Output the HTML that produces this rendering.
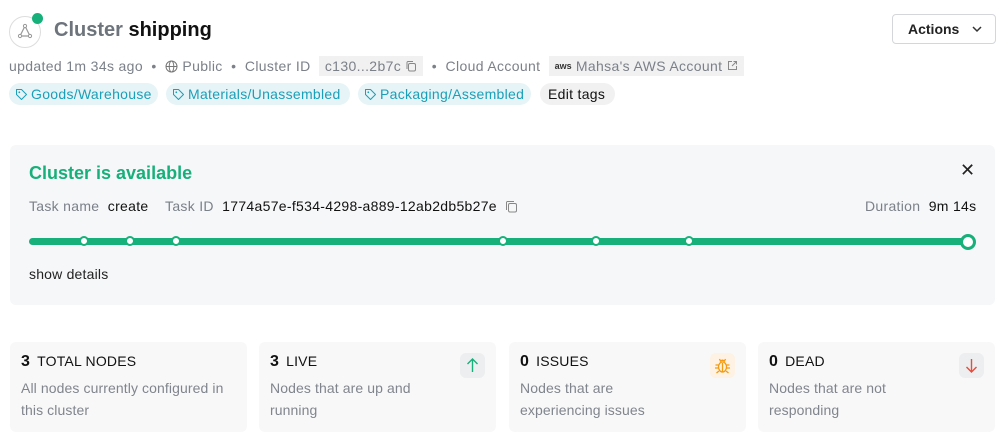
<!DOCTYPE html>
<html><head><meta charset="utf-8"><style>
*{box-sizing:border-box;margin:0;padding:0}
body{width:1006px;height:440px;background:#fff;font-family:"Liberation Sans",sans-serif;position:relative;overflow:hidden;color:#111}
.abs{position:absolute}
.g{color:#7b8089}
.pill{position:absolute;top:83px;height:22px;border-radius:11px;background:#e6f4f7;color:#1a9fb8;font-size:14px;line-height:22px;padding:0 0 0 6px;white-space:nowrap;letter-spacing:0.3px}
.pill svg{vertical-align:-2px;margin-right:3px}
.card{position:absolute;top:342px;width:237px;height:90px;background:#f8f8f9;border-radius:6px}
.card .t{position:absolute;left:11px;top:11px;font-size:14px;color:#111;letter-spacing:0.2px}
.card .t b{font-size:16px;margin-right:7px}
.card .d{position:absolute;left:11px;top:35px;font-size:14px;line-height:22px;color:#80858d;width:215px;letter-spacing:0.1px}
.ic{position:absolute;right:11px;top:11px;width:25px;height:25px;border-radius:6px;background:#eceef0}
.dot{position:absolute;top:236px;width:10px;height:10px;border-radius:50%;background:#fff;border:2.5px solid #17b07a}
</style></head><body>
<svg class="abs" style="left:8px;top:15px" width="40" height="40"><circle cx="17" cy="17" r="15.5" fill="none" stroke="#ddd"/><path d="M17 11 L12 21 L22 21 Z" fill="none" stroke="#999" stroke-width="1.2"/><circle cx="17" cy="11" r="1.6" fill="#fff" stroke="#999"/><circle cx="12" cy="21" r="1.6" fill="#fff" stroke="#999"/><circle cx="22" cy="21" r="1.6" fill="#fff" stroke="#999"/></svg>
<div class="abs" style="left:32px;top:13px;width:11px;height:11px;border-radius:50%;background:#17b07a"></div>
<div class="abs" style="left:54px;top:19px;font-size:20px;font-weight:bold;white-space:nowrap"><span style="color:#6e747c">Cluster</span> <span>shipping</span></div>
<div class="abs" style="left:892px;top:14px;width:104px;height:30px;border:1px solid #d3d6da;border-radius:4px;font-size:14px;font-weight:bold;line-height:28px;padding-left:15px;color:#222">Actions<svg class="abs" style="left:78px;top:9px" width="12" height="10"><path d="M2 3 L6 7 L10 3" fill="none" stroke="#333" stroke-width="1.5"/></svg></div>
<div class="abs g" style="left:9px;top:57px;font-size:14px;line-height:18px;white-space:nowrap;letter-spacing:0.35px">updated 1m 34s ago &nbsp;•&nbsp;
<svg width="13" height="13" style="vertical-align:-2px"><circle cx="6.5" cy="6.5" r="5.5" fill="none" stroke="#777"/><ellipse cx="6.5" cy="6.5" rx="2.3" ry="5.5" fill="none" stroke="#777"/><path d="M1 6.5H12" stroke="#777"/></svg> Public &nbsp;•&nbsp; Cluster ID
<span style="background:#f1f1f2;padding:2px 6px;margin-left:4px">c130...2b7c <svg width="12" height="12" style="vertical-align:-1px"><rect x="3.5" y="3.5" width="7" height="7.5" rx="1.5" fill="none" stroke="#888"/><path d="M2 9V2.5A1 1 0 0 1 3 1.5H8" fill="none" stroke="#888"/></svg></span> &nbsp;•&nbsp; Cloud Account
<span style="background:#f1f1f2;padding:2px 6px;margin-left:4px"><span style="font-size:9px;color:#333;vertical-align:2px;font-weight:bold;letter-spacing:0">aws</span> Mahsa's AWS Account <svg width="11" height="11"><path d="M5 1.5H1.5V9.5H9.5V6M6.5 1.5H9.5V4.5M9.5 1.5L5 6" fill="none" stroke="#888"/></svg></span></div>
<div class="pill" style="left:9px;width:149px"><svg width="13" height="13"><path d="M1.5 1.5H6.5L11.5 6.5L6.5 11.5L1.5 6.5Z" fill="none" stroke="#1a9fb8" stroke-linejoin="round"/><circle cx="4.3" cy="4.3" r="0.9" fill="#1a9fb8"/></svg>Goods/Warehouse</div>
<div class="pill" style="left:166px;width:184px"><svg width="13" height="13"><path d="M1.5 1.5H6.5L11.5 6.5L6.5 11.5L1.5 6.5Z" fill="none" stroke="#1a9fb8" stroke-linejoin="round"/><circle cx="4.3" cy="4.3" r="0.9" fill="#1a9fb8"/></svg>Materials/Unassembled</div>
<div class="pill" style="left:358px;width:173px"><svg width="13" height="13"><path d="M1.5 1.5H6.5L11.5 6.5L6.5 11.5L1.5 6.5Z" fill="none" stroke="#1a9fb8" stroke-linejoin="round"/><circle cx="4.3" cy="4.3" r="0.9" fill="#1a9fb8"/></svg>Packaging/Assembled</div>
<div class="pill" style="left:540px;width:75px;background:#f1f1f2;color:#111;padding-left:8px">Edit tags</div>

<div class="abs" style="left:10px;top:145px;width:985px;height:160px;background:#f6f7f9;border-radius:6px"></div>
<div class="abs" style="left:29px;top:163px;font-size:18px;font-weight:bold;color:#17b07a">Cluster is available</div>
<div class="abs" style="left:960px;top:160px;font-size:18px;color:#222">✕</div>
<div class="abs" style="left:29px;top:198px;font-size:14px;white-space:nowrap;letter-spacing:0.3px"><span class="g">Task name</span>&nbsp; create &nbsp;&nbsp; <span class="g">Task ID</span>&nbsp; 1774a57e-f534-4298-a889-12ab2db5b27e &nbsp;<svg width="13" height="13" style="vertical-align:-2px"><rect x="3.5" y="3.5" width="8" height="8.5" rx="1.5" fill="none" stroke="#888"/><path d="M1.5 10V2.5A1 1 0 0 1 2.5 1.5H9" fill="none" stroke="#888"/></svg></div>
<div class="abs" style="left:865px;top:198px;font-size:14px;white-space:nowrap;letter-spacing:0.3px"><span class="g">Duration</span>&nbsp; 9m 14s</div>
<div class="abs" style="left:29px;top:238px;width:940px;height:7px;border-radius:4px;background:#17b07a"></div>
<div class="dot" style="left:79px"></div><div class="dot" style="left:125px"></div><div class="dot" style="left:171px"></div><div class="dot" style="left:498px"></div><div class="dot" style="left:591px"></div><div class="dot" style="left:684px"></div>
<div class="abs" style="left:960px;top:234px;width:16px;height:16px;border-radius:50%;background:#fff;border:3px solid #17b07a"></div>
<div class="abs" style="left:29px;top:266px;font-size:14px;color:#222;letter-spacing:0.2px">show details</div>

<div class="card" style="left:10px"><div class="t"><b>3</b>TOTAL NODES</div><div class="d">All nodes currently configured in this cluster</div></div>
<div class="card" style="left:259px"><div class="t"><b>3</b>LIVE</div><div class="d" style="width:160px">Nodes that are up and running</div><div class="ic"><svg width="25" height="25"><path d="M12.5 19V6M7.5 11L12.5 6L17.5 11" fill="none" stroke="#17b07a" stroke-width="1.4"/></svg></div></div>
<div class="card" style="left:509px"><div class="t"><b>0</b>ISSUES</div><div class="d" style="width:150px">Nodes that are experiencing issues</div><div class="ic" style="background:#fdf2e3"><svg width="25" height="25" fill="none" stroke="#f39c12" stroke-width="1.3"><ellipse cx="12.5" cy="14" rx="4" ry="5"/><path d="M10 8.5Q12.5 6 15 8.5M8.5 12H5.5M16.5 12H19.5M8.5 15H5M16.5 15H20M9 18L6.5 20M16 18L18.5 20M12.5 10V19M9.5 6L10.5 8M15.5 6L14.5 8"/></svg></div></div>
<div class="card" style="left:758px"><div class="t"><b>0</b>DEAD</div><div class="d" style="width:140px">Nodes that are not responding</div><div class="ic"><svg width="25" height="25"><path d="M12.5 6V19M7.5 14L12.5 19L17.5 14" fill="none" stroke="#e74c3c" stroke-width="1.4"/></svg></div></div>
</body></html>
